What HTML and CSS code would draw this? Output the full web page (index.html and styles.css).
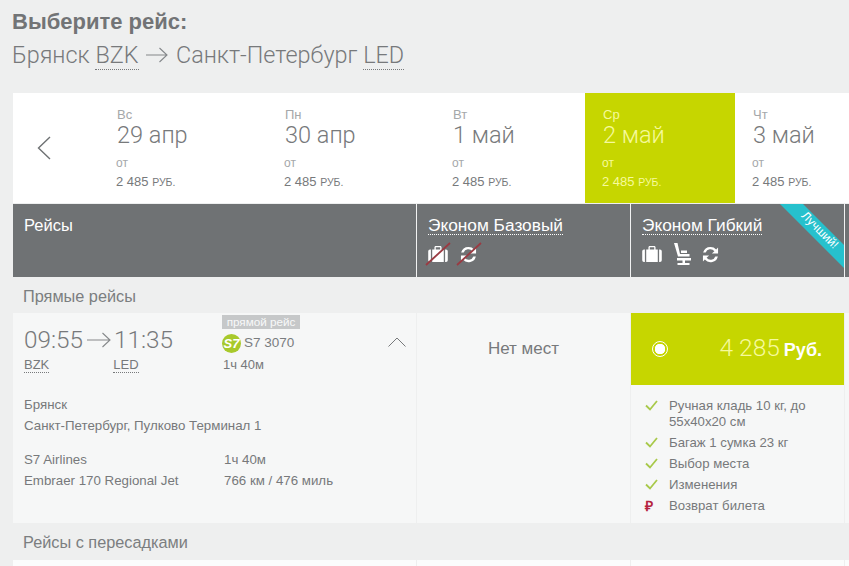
FILE: index.html
```html
<!DOCTYPE html>
<html lang="ru">
<head>
<meta charset="utf-8">
<title>Выберите рейс</title>
<link rel="stylesheet" href="styles.css">
</head>
<body>
<main class="page">
  <h1 class="title">Выберите рейс:</h1>
  <p class="route">Брянск <span class="dot">BZK</span> <svg class="route-arrow" viewBox="0 0 22 16"><path d="M0 8h21M13.500 1l7.500 7-7.500 7"/></svg> Санкт-Петербург <span class="dot">LED</span></p>

  <section class="dates">
    <div class="nav"><svg class="chev" viewBox="0 0 14 24"><path d="M13 1L1.500 12 13 23"/></svg></div>
    <div class="day day-wide"><span class="wd">Вс</span><span class="dt">29 апр</span><span class="from">от</span><span class="pr">2 485 <small>РУБ.</small></span></div>
    <div class="day day-wide"><span class="wd">Пн</span><span class="dt">30 апр</span><span class="from">от</span><span class="pr">2 485 <small>РУБ.</small></span></div>
    <div class="day"><span class="wd">Вт</span><span class="dt">1 май</span><span class="from">от</span><span class="pr">2 485 <small>РУБ.</small></span></div>
    <div class="day day-on"><span class="wd">Ср</span><span class="dt">2 май</span><span class="from">от</span><span class="pr">2 485 <small>РУБ.</small></span></div>
    <div class="day"><span class="wd">Чт</span><span class="dt">3 май</span><span class="from">от</span><span class="pr">2 485 <small>РУБ.</small></span></div>
  </section>

  <section class="head">
    <div class="hc hc-first">Рейсы</div>
    <div class="hc">
      <span class="fare">Эконом Базовый</span>
      <div class="icons">
        <span class="ico-x">
          <svg class="ico" viewBox="0 0 22 18"><path class="fill" d="M7 4V1.500C7 .7 7.700 0 8.500 0h5C14.300 0 15 .7 15 1.500V4h-1.500V1.500h-5V4zM0 6a2 2 0 0 1 2-2h1v14H2a2 2 0 0 1-2-2zM4.500 4h13v14h-13zM19 4h1a2 2 0 0 1 2 2v10a2 2 0 0 1-2 2h-1z"/></svg>
          <svg class="slash" viewBox="0 0 26 24"><path d="M1 23L25 1"/></svg>
        </span>
        <span class="ico-x ico-x-r">
          <svg class="ico ico-r" viewBox="0 0 18 18"><path class="fill" d="M9 1a8 8 0 0 1 6 2.600L17 1.500V8h-6.500l2.600-2.500A5.300 5.300 0 0 0 3.900 7H1.200A8 8 0 0 1 9 1zM1 10h6.500l-2.600 2.500A5.300 5.300 0 0 0 14.100 11h2.700A8 8 0 0 1 3 14.400L1 16.500z"/></svg>
          <svg class="slash" viewBox="0 0 26 24"><path d="M1 23L25 1"/></svg>
        </span>
      </div>
    </div>
    <div class="hc">
      <span class="fare">Эконом Гибкий</span>
      <div class="icons icons-2">
        <svg class="ico" viewBox="0 0 22 18"><path class="fill" d="M7 4V1.500C7 .7 7.700 0 8.500 0h5C14.300 0 15 .7 15 1.500V4h-1.500V1.500h-5V4zM0 6a2 2 0 0 1 2-2h1v14H2a2 2 0 0 1-2-2zM4.500 4h13v14h-13zM19 4h1a2 2 0 0 1 2 2v10a2 2 0 0 1-2 2h-1z"/></svg>
        <svg class="ico-seat" viewBox="0 0 18 22"><path class="fill" d="M1 0h3.500l2.500 11h9.500v2.500H5zM8 7.500h6V10H8zM4 15h14v2.500h-6V20h4.500v2h-12v-2H9.500v-2.500H4z"/></svg>
        <svg class="ico ico-r" viewBox="0 0 18 18"><path class="fill" d="M9 1a8 8 0 0 1 6 2.600L17 1.500V8h-6.500l2.600-2.500A5.300 5.300 0 0 0 3.900 7H1.200A8 8 0 0 1 9 1zM1 10h6.500l-2.600 2.500A5.300 5.300 0 0 0 14.100 11h2.700A8 8 0 0 1 3 14.400L1 16.500z"/></svg>
      </div>
      <div class="ribbon"><span class="ribbon-t">Лучший!</span></div>
    </div>
    <div class="hc hc-rest"></div>
  </section>

  <h2 class="sect">Прямые рейсы</h2>

  <section class="row">
    <div class="col col-flight">
      <div class="top">
        <div class="times">
          <div class="clock"><span>09:55</span><svg class="t-arrow" viewBox="0 0 24 16"><path d="M0 8h23M15.500 1l7.500 7-7.500 7"/></svg><span>11:35</span></div>
          <div class="codes"><span class="dot dot-a">BZK</span><span class="dot">LED</span></div>
        </div>
        <div class="flight">
          <span class="badge">прямой рейс</span>
          <div class="fl-no"><span class="logo">S7</span>S7 3070</div>
          <div class="fl-dur">1ч 40м</div>
        </div>
        <svg class="up" viewBox="0 0 18 10"><path d="M.5 9.500L9 1l8.500 8.500"/></svg>
      </div>
      <div class="places"><p>Брянск</p><p>Санкт-Петербург, Пулково Терминал 1</p></div>
      <div class="meta">
        <div class="meta-c"><p>S7 Airlines</p><p>Embraer 170 Regional Jet</p></div>
        <div><p>1ч 40м</p><p>766 км / 476 миль</p></div>
      </div>
    </div>
    <div class="col col-none">Нет мест</div>
    <div class="col col-price">
      <div class="price">
        <span class="radio"></span>
        <span class="sum">4 285 <b>Руб.</b></span>
      </div>
      <ul class="feats">
        <li><svg class="chk" viewBox="0 0 13 11"><path d="M1 5.500l4 4L12 1"/></svg><span class="ft-two">Ручная кладь 10 кг, до 55x40x20 см</span></li>
        <li><svg class="chk" viewBox="0 0 13 11"><path d="M1 5.500l4 4L12 1"/></svg><span>Багаж 1 сумка 23 кг</span></li>
        <li><svg class="chk" viewBox="0 0 13 11"><path d="M1 5.500l4 4L12 1"/></svg><span>Выбор места</span></li>
        <li><svg class="chk" viewBox="0 0 13 11"><path d="M1 5.500l4 4L12 1"/></svg><span>Изменения</span></li>
        <li><span class="rub">₽</span><span>Возврат билета</span></li>
      </ul>
    </div>
    <div class="col-rest"></div>
  </section>

  <h2 class="sect sect-2">Рейсы с пересадками</h2>

  <section class="row row-next">
    <div class="col col-flight"></div>
    <div class="col"></div>
    <div class="col"></div>
  </section>
</main>
</body>
</html>
```

FILE: styles.css
```css
* { box-sizing: border-box; }
html, body { margin: 0; height: 566px; overflow: hidden; }
body {
  background: #eeefef;
  color: #77797b;
  font-family: "Liberation Sans", Arial, sans-serif;
  font-size: 13.300px;
}
p, h1, h2, ul { margin: 0; padding: 0; font-weight: normal; }
.page { padding-left: 13px; width: 849px; height: 566px; overflow: hidden; }

.title { padding-top: 10px; height: 37px; margin-left: -1px; font-size: 22px; line-height: 23px; font-weight: bold; color: #727476; }
.route { height: 56px; margin-left: -1px; padding-top: 4px; font-family: Roboto, "Liberation Sans", sans-serif; font-weight: 300; font-size: 23.400px; line-height: 28px; color: #77797b; white-space: nowrap; }
.dot { border-bottom: 1px dotted #77797b; }
.route-arrow { width: 22px; height: 16px; margin: 0 2px; fill: none; stroke: #84878a; stroke-width: 1.100; }

.dates { display: flex; height: 110px; background: #fff; overflow: hidden; }
.nav { flex: 0 0 86px; padding: 43px 0 0 24px; }
.chev { display: block; width: 14px; height: 24px; fill: none; stroke: #6e7173; stroke-width: 1.400; }
.day { flex: 0 0 150px; padding: 14px 0 0 18px; display: flex; flex-direction: column; color: #7f8284; }
.day-wide { flex-basis: 168px; }
.wd { font-size: 13px; line-height: 15px; color: #a5a8aa; }
.dt { font-family: Roboto, "Liberation Sans", sans-serif; font-weight: 300; font-size: 23.500px; line-height: 26px; color: #77797b; }
.from { margin-top: 8px; margin-left: -1px; font-size: 12px; line-height: 14px; color: #a5a8aa; }
.pr { margin-top: 5px; margin-left: -1px; font-size: 13px; line-height: 14px; color: #77797b; }
.pr small { font-size: 10.500px; }
.day-on { background: #c6d600; }
.day-on .wd, .day-on .dt, .day-on .from, .day-on .pr { color: #f6fa9c; }

.head { display: flex; height: 73px; margin-top: 1px; background: #6f7274; color: #fff; }
.hc { position: relative; flex: 0 0 214px; padding: 12px 0 0 11px; border-right: 1px solid #f1f2f2; overflow: hidden; }
.hc-first { flex-basis: 404px; font-size: 16.500px; line-height: 18px; }
.hc-rest { flex: 1; border: 0; }
.fare { display: inline-block; font-size: 17.300px; line-height: 18px; border-bottom: 1px dotted #fff; }
.icons { display: flex; align-items: center; gap: 12px; margin-top: 7px; height: 24px; }
.icons-2 { gap: 11px; }
.fill { fill: #fff; }
.ico { display: block; width: 20px; height: 16px; }
.ico-r { width: 17px; height: 17px; }
.ico-seat { display: block; width: 18px; height: 22px; }
.ico-x { position: relative; display: block; }
.slash { position: absolute; left: -3px; top: -4px; width: 26px; height: 24px; fill: none; stroke: #9a3a42; stroke-width: 1.800; }
.ico-x-r .slash { left: -4px; }
.ribbon {
  position: absolute;
  top: 0;
  right: 0;
  width: 64px;
  height: 64px;
  background: #26c1cd;
  clip-path: polygon(0 0, 23px 0, 100% 41px, 100% 100%);
}
.ribbon-t { position: absolute; left: 5px; top: 20px; width: 70px; text-align: center; font-size: 12px; line-height: 12px; transform: rotate(45deg); color: #fff; }

.sect { height: 36px; padding: 10px 0 0 10px; font-size: 16.300px; line-height: 18px; color: #7b7e80; }
.sect-2 { height: 37px; padding-top: 10px; }

.row { display: flex; height: 210px; background: #f6f7f7; }
.row-next { height: 6px; background: #fbfcfc; }
.col { flex: 0 0 214px; border-right: 1px solid #eeefef; }
.col-flight { flex-basis: 404px; padding-left: 11px; }
.top { display: flex; position: relative; height: 70px; }
.times { flex: 0 0 198px; padding-top: 13px; }
.clock { display: flex; align-items: center; font-family: Roboto, "Liberation Sans", sans-serif; font-weight: 300; font-size: 24.300px; line-height: 28px; color: #77797b; }
.t-arrow { width: 24px; height: 16px; margin: 0 3px 0 4px; fill: none; stroke: #85888a; stroke-width: 1.100; }
.codes { display: flex; margin-top: 3px; font-size: 13px; line-height: 15px; color: #77797b; }
.dot-a { margin-right: 64px; }
.flight { position: relative; padding-top: 2px; }
.badge { display: block; width: 78px; height: 14px; background: #c6c8c9; color: #f8f9f9; font-size: 11.700px; line-height: 14px; text-align: center; }
.fl-no { display: flex; align-items: center; margin-top: 4px; font-size: 13.500px; line-height: 20px; color: #7a7d7f; }
.logo { display: inline-block; width: 19px; height: 19px; margin-right: 3px; border-radius: 50%; background: #a8c92b; color: #fff; font-size: 13px; line-height: 19px; font-weight: bold; font-style: italic; text-align: center; }
.fl-dur { margin-top: 4px; margin-left: 1px; font-size: 13px; line-height: 15px; }
.up { position: absolute; left: 364px; top: 24px; width: 18px; height: 10px; fill: none; stroke: #77797b; stroke-width: 1; }
.places { padding-top: 11px; line-height: 21px; }
.meta { display: flex; margin-top: 13px; line-height: 21px; }
.meta-c { flex: 0 0 200px; }

.col-none { padding-top: 27px; text-align: center; font-size: 17px; line-height: 18px; }
.price { display: flex; align-items: center; justify-content: space-between; height: 72px; padding: 0 22px 0 21px; background: #c6d600; color: #f6fa9c; }
.radio { width: 16px; height: 16px; border: 1px solid #fff; border-radius: 50%; background: radial-gradient(circle, #fff 0 5px, transparent 5.500px); }
.sum { font-family: Roboto, "Liberation Sans", sans-serif; font-weight: 300; font-size: 24.500px; line-height: 28px; }
.sum b { margin-left: -2px; font-family: "Liberation Sans", sans-serif; font-weight: 700; font-size: 18px; color: #fff; }
.feats { list-style: none; padding: 13px 10px 0 14px; font-size: 13.200px; }
.feats li { display: flex; margin-bottom: 5px; line-height: 16px; }
.chk { flex: 0 0 13px; width: 13px; height: 11px; margin: 2px 11px 0 0; fill: none; stroke: #a8c94a; stroke-width: 1.800; }
.rub { flex: 0 0 13px; margin-right: 11px; font-size: 14px; line-height: 16px; font-weight: bold; color: #b5243f; }
.col-rest { flex: 1; }
```
